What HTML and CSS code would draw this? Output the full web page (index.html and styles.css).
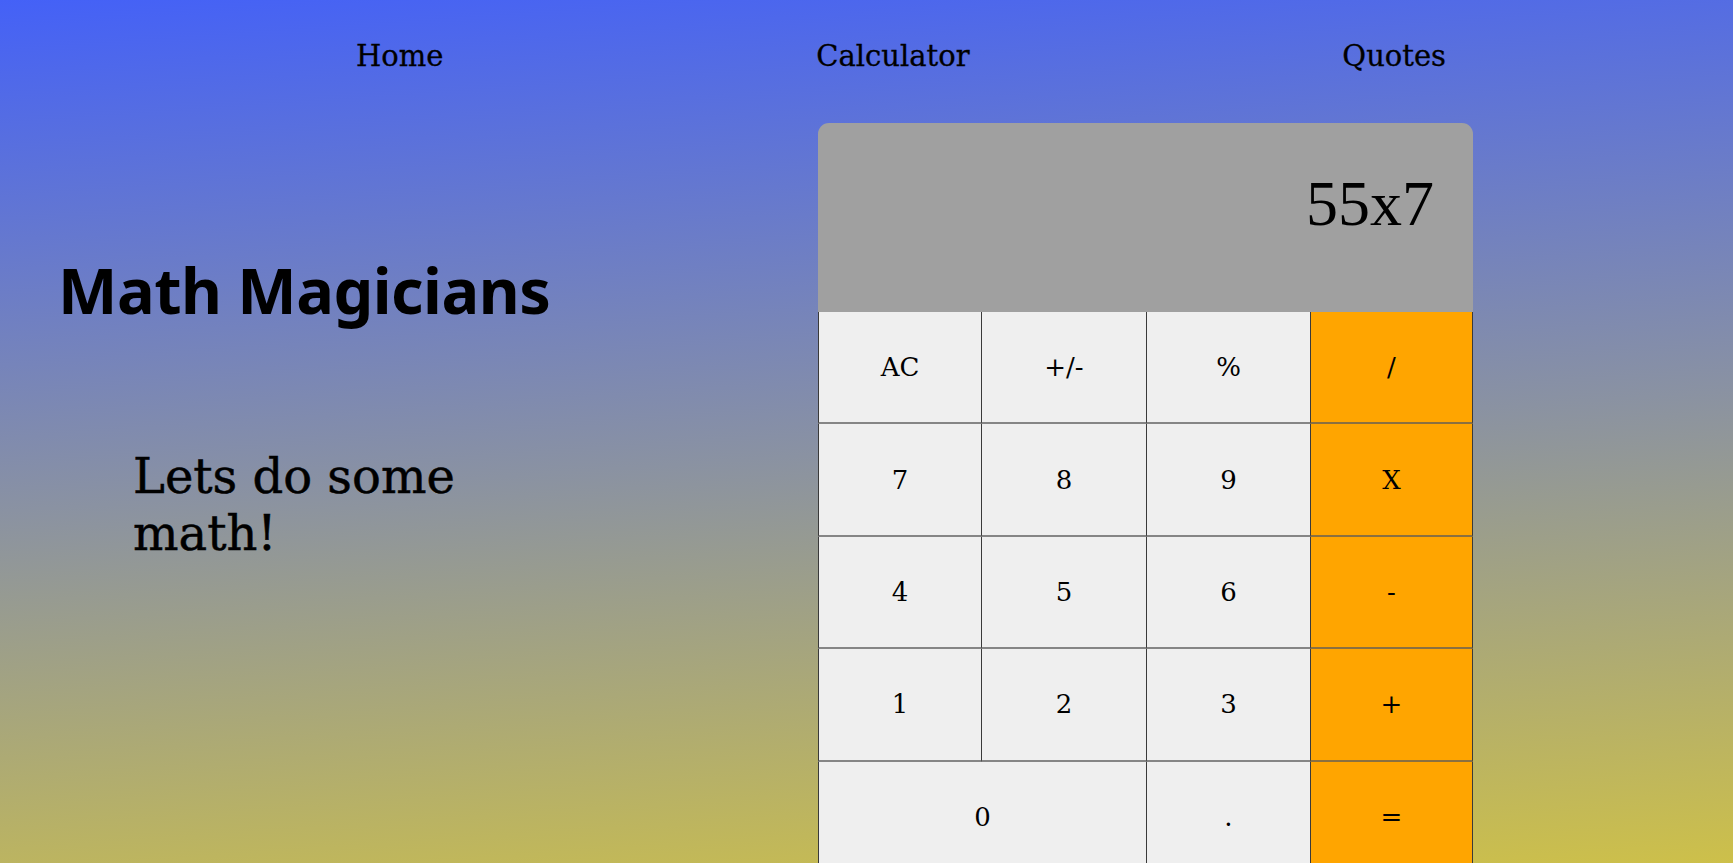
FILE: index.html
```html
<!DOCTYPE html>
<html lang="en">
<head>
<meta charset="utf-8">
<title>Math Magicians</title>
<link rel="stylesheet" href="styles.css">
</head>
<body>
  <nav class="nav">
    <a class="nav-link" href="#">Home</a>
    <a class="nav-link" href="#">Calculator</a>
    <a class="nav-link" href="#">Quotes</a>
  </nav>
  <main class="main">
    <section class="intro">
      <h1 class="title">Math Magicians</h1>
      <p class="tagline">Lets do some math!</p>
    </section>
    <section class="calculator">
      <div class="display">55x7</div>
      <div class="keys">
        <button class="key">AC</button>
        <button class="key">+/-</button>
        <button class="key">%</button>
        <button class="key op">/</button>
        <button class="key">7</button>
        <button class="key">8</button>
        <button class="key">9</button>
        <button class="key op">X</button>
        <button class="key">4</button>
        <button class="key">5</button>
        <button class="key">6</button>
        <button class="key op">-</button>
        <button class="key">1</button>
        <button class="key">2</button>
        <button class="key">3</button>
        <button class="key op">+</button>
        <button class="key wide">0</button>
        <button class="key">.</button>
        <button class="key op">=</button>
      </div>
    </section>
  </main>
</body>
</html>
```
FILE: styles.css
```css
html, body {
  margin: 0;
  padding: 0;
}

body {
  height: 863px;
  overflow: hidden;
  background: linear-gradient(176deg, #4461f7 0%, #8a92a2 52%, #cdc04a 100%);
  font-family: "DejaVu Serif", serif;
  color: #000;
}

.nav {
  box-sizing: border-box;
  height: 123px;
  padding-top: 39px;
  margin-left: 356px;
  width: 1090px;
  display: flex;
  justify-content: space-between;
  align-items: flex-start;
}

.nav-link {
  font-family: "DejaVu Serif", serif;
  font-size: 29px;
  color: #000;
  text-decoration: none;
  -webkit-text-stroke: 0.3px #000;
}

.main {
  display: flex;
  align-items: flex-start;
}

.intro {
  flex: none;
  width: 818px;
}

.title {
  margin: 135px 0 0 58px;
  font-family: "Noto Sans", sans-serif;
  font-weight: 700;
  font-size: 63px;
  line-height: 63px;
  letter-spacing: -0.5px;
}

.tagline {
  margin: 127px 0 0 133px;
  width: 360px;
  font-family: "DejaVu Serif", serif;
  font-size: 48px;
  line-height: 57px;
  -webkit-text-stroke: 0.5px #000;
}

.calculator {
  flex: none;
  width: 655px;
  border-radius: 11px 11px 0 0;
  overflow: hidden;
}

.display {
  box-sizing: border-box;
  height: 189px;
  padding: 44px 39px 0 0;
  background: #a0a0a0;
  text-align: right;
  font-family: "Liberation Serif", serif;
  font-size: 64px;
}

.keys {
  display: grid;
  grid-template-columns: 163px 165px 164px 163px;
  grid-auto-rows: 112.4px;
}

.key {
  box-sizing: border-box;
  margin: 0;
  padding: 0;
  background: #efefef;
  border: none;
  border-left: 1px solid #3a3a3a;
  border-bottom: 2px solid #858585;
  font-family: "DejaVu Serif", serif;
  font-size: 26px;
  color: #000;
}

.key.op {
  background: #ffa500;
  border-right: 1px solid #3a3a3a;
  border-bottom-color: #8a7040;
}

.key.wide {
  grid-column: span 2;
}
```
